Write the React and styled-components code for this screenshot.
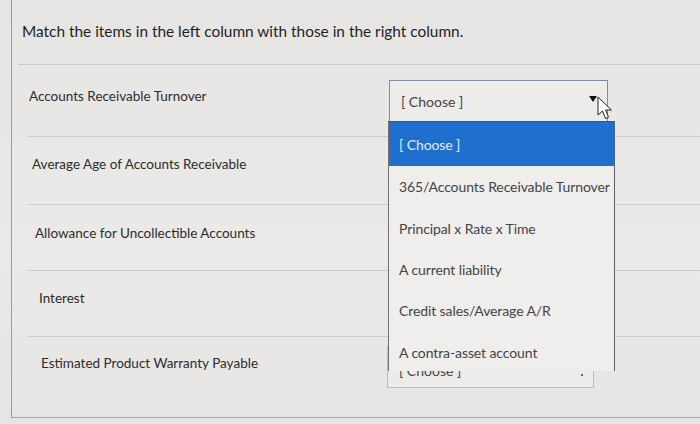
import React from "react";
import styled, { createGlobalStyle } from "styled-components";

const Global = createGlobalStyle`
  html, body { margin: 0; padding: 0; }
  body {
    width: 700px; height: 424px; overflow: hidden;
    background: #e4e3e1;
    font-family: Lato, "Open Sans", sans-serif;
  }
`;

const Page = styled.div`
  width: 700px;
  height: 424px;
  position: relative;
  overflow: hidden;
  background: linear-gradient(180deg, #e6e5e3 0%, #ebeae8 60%, #e6e5e3 100%);
`;

const Question = styled.div`
  margin-left: 11px;
  height: 417px;
  border-left: 1px solid #9c9c9a;
  border-bottom: 1px solid #a4a4a2;
  position: relative;
`;

const Header = styled.div`
  height: 65px;
  box-sizing: border-box;
  padding: 22px 0 0 4px;
  font-size: 15.4px;
  color: #1f1f1f;
  margin-left: 6px;
  border-bottom: 1px solid #cbcac8;
`;

const Row = styled.div`
  display: grid;
  grid-template-columns: 361px 1fr;
  margin-left: 16px;
  height: ${(p) => p.$h}px;
  box-sizing: border-box;
  border-bottom: ${(p) => (p.$last ? "none" : "1px solid #cdccca")};
`;

const Label = styled.div`
  font-size: 13.5px;
  color: #2c2c2c;
  padding-top: ${(p) => p.$top}px;
  padding-left: ${(p) => p.$indent}px;
`;

const Select = styled.div`
  margin-top: ${(p) => p.$top}px;
  width: 219px;
  height: 42px;
  box-sizing: border-box;
  border: 1px solid ${(p) => (p.$focus ? "#7d8ea3" : "#bdbcba")};
  background: #edecea;
  display: flex;
  align-items: center;
  justify-content: space-between;
  padding: 0 10px 0 11px;
  font-size: 14px;
  color: #444;
`;

const LastSelect = styled(Select)`
  width: 207px;
  margin-left: -2px;
  align-items: flex-start;
  padding-top: 23px;
`;

const Caret = styled.span`
  width: 0;
  height: 0;
  border-left: 4px solid transparent;
  border-right: 4px solid transparent;
  border-top: 6px solid #111;
  margin-top: -4px;
`;

const Dot = styled.span`
  width: 2px;
  height: 2px;
  margin-top: 4px;
  background: #666;
`;

const Hidden = styled.span`
  visibility: hidden;
`;

const Menu = styled.ul`
  position: absolute;
  left: 388px;
  top: 121px;
  width: 227px;
  height: 250px;
  margin: 0;
  padding: 0;
  list-style: none;
  background: #efeeec;
  border-left: 1px solid #6f7278;
  border-right: 1px solid #5c5f64;
  border-top: 1px solid #4a5563;
  box-sizing: border-box;
  z-index: 2;
`;

const Option = styled.li`
  height: ${(p) => (p.$active ? 44 : 41.4)}px;
  display: flex;
  align-items: center;
  padding-left: 10px;
  font-size: 14px;
  letter-spacing: -0.1px;
  color: ${(p) => (p.$active ? "#e4ecf7" : "#444")};
  background: ${(p) => (p.$active ? "#1f6fcf" : "transparent")};
  white-space: nowrap;
  box-sizing: border-box;
`;

const Cursor = styled.svg`
  position: absolute;
  left: 596px;
  top: 96px;
  z-index: 3;
`;

const Clip = styled.div`
  overflow: hidden;
  height: 8px;
  display: flex;
  align-items: flex-end;
  line-height: 1;
`;

const rows = [
  { label: "Accounts Receivable Turnover", h: 72, top: 23, indent: 1, focus: true },
  { label: "Average Age of Accounts Receivable", h: 68, top: 19, indent: 4 },
  { label: "Allowance for Uncollectible Accounts", h: 66, top: 20, indent: 7 },
  { label: "Interest", h: 66, top: 19, indent: 11 },
  { label: "Estimated Product Warranty Payable", h: 80, top: 18, indent: 13, last: true },
];

const options = [
  "[ Choose ]",
  "365/Accounts Receivable Turnover",
  "Principal x Rate x Time",
  "A current liability",
  "Credit sales/Average A/R",
  "A contra-asset account",
];

export default function App() {
  return (
    <Page>
      <Global />
      <Question>
        <Header>Match the items in the left column with those in the right column.</Header>
        {rows.map((r, i) => (
          <Row key={i} $h={r.h} $last={r.last}>
            <Label $top={r.top} $indent={r.indent}>{r.label}</Label>
            <div>
              {r.focus ? (
                <Select $top={15} $focus>
                  <span>[ Choose ]</span>
                  <Caret />
                </Select>
              ) : r.last ? (
                <LastSelect $top={9}>
                  <Clip><span>[ Choose ]</span></Clip>
                  <Dot />
                </LastSelect>
              ) : (
                <Select $top={15}>
                  <Hidden>[ Choose ]</Hidden>
                  <Caret />
                </Select>
              )}
            </div>
          </Row>
        ))}
      </Question>
      <Menu>
        {options.map((o, i) => (
          <Option key={i} $active={i === 0}>{o}</Option>
        ))}
      </Menu>
      <Cursor width="20" height="26" viewBox="0 0 20 26">
        <path d="M2 1 L2 19 L6.5 15 L9.5 22.5 L12.5 21.2 L9.6 14 L15.5 14 Z" fill="#fff" stroke="#222" strokeWidth="1" strokeLinejoin="round" />
      </Cursor>
    </Page>
  );
}
